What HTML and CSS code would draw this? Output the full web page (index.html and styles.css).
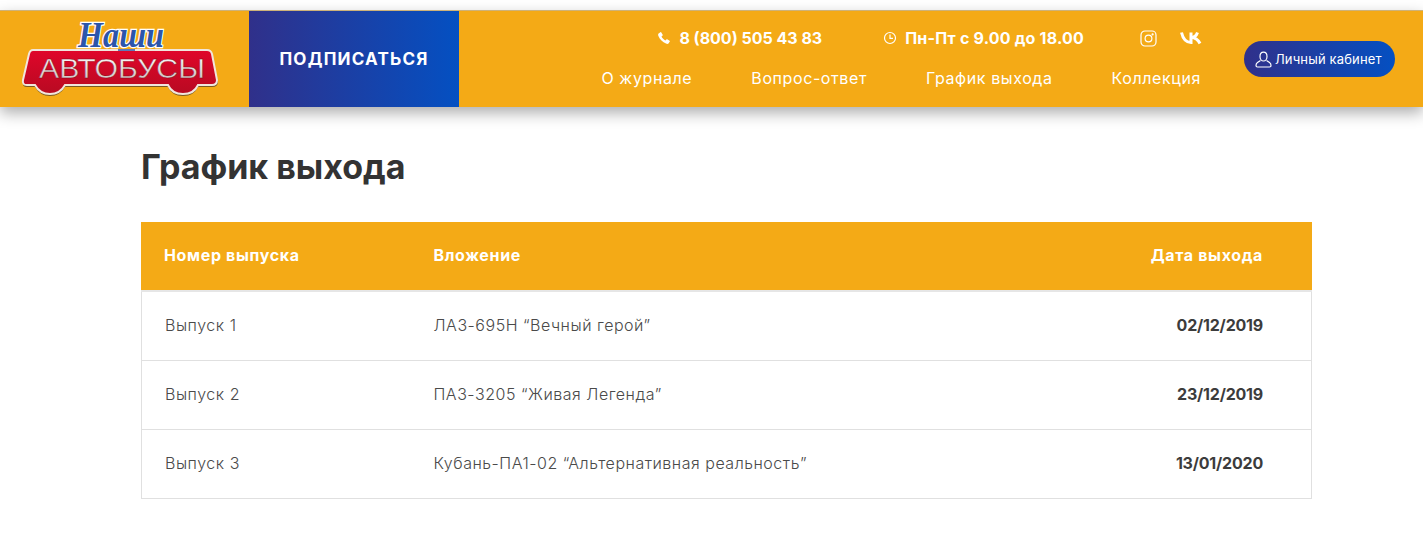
FILE: index.html
```html
<!DOCTYPE html>
<html lang="ru">
<head>
    <meta charset="UTF-8">
    <meta name="viewport" content="width=device-width, initial-scale=1.0">
    <title>График выхода</title>
    <link rel="stylesheet" href="styles.css">
</head>
<body>
    <header class="header">
        <a class="logo" href="#">
            <svg class="logo-img" width="210" height="85" viewBox="15 15 210 85">
                <defs>
                    <linearGradient id="busRed" x1="0" y1="0" x2="0" y2="1">
                        <stop offset="0" stop-color="#e0062a"/>
                        <stop offset="1" stop-color="#b80a22"/>
                    </linearGradient>
                    <linearGradient id="busText" x1="0" y1="0" x2="0" y2="1">
                        <stop offset="0" stop-color="#ffffff"/>
                        <stop offset="1" stop-color="#c9b9b9"/>
                    </linearGradient>
                </defs>
                <path class="bus-shadow" d="M33 52H207Q211 52 212 56L218 82Q218 87 212 87H198Q194 96 183 96Q172 96 168 87H65Q60 96 50 96Q40 96 35 87H27Q22 87 23 82L29 56Q30 52 33 52Z"/>
                <path class="bus-body" d="M33 50H207Q211 50 212 54L217 80Q217 85 212 85H198Q194 94 183 94Q172 94 168 85H65Q60 94 50 94Q40 94 35 85H27Q22 85 23 80L29 54Q30 50 33 50Z"/>
                <text class="bus-title" x="39" y="78" textLength="166" lengthAdjust="spacingAndGlyphs">АВТОБУСЫ</text>
                <text class="bus-script" x="78" y="47" textLength="86" lengthAdjust="spacingAndGlyphs">Наши</text>
                <path class="bus-line" d="M118 50H135"/>
            </svg>
        </a>
        <a class="subscribe" href="#">ПОДПИСАТЬСЯ</a>
        <div class="header-info">
            <div class="contacts">
                <span class="contact">
                    <svg class="icon-solid" width="14" height="14" viewBox="0 0 14 14"><path d="M3.400 1.200 1.600 2.500C1 3 1 4 1.400 5 2.800 8.400 5.600 11.200 9 12.600 10 13 11 13 11.500 12.400L12.800 10.600C13 10.300 13 10 12.600 9.700L10.200 8.300C9.900 8.100 9.600 8.200 9.400 8.400L8.400 9.500C6.900 8.800 5.200 7.100 4.500 5.600L5.600 4.600C5.800 4.400 5.900 4.100 5.700 3.800L4.300 1.400C4 1 3.700 1 3.400 1.200Z"/></svg>
                    8 (800) 505 43 83
                </span>
                <span class="contact contact-time">
                    <svg class="icon-line" width="14" height="14" viewBox="0 0 14 14"><circle cx="7" cy="7" r="5.500"/><path d="M7 3.500V7.300H10"/></svg>
                    Пн-Пт с 9.00 до 18.00
                </span>
                <span class="socials">
                    <svg class="icon-line" width="17" height="17" viewBox="0 0 17 17"><rect x="1" y="1" width="15" height="15" rx="4"/><circle cx="8.500" cy="8.500" r="3.400"/><circle cx="12.600" cy="4.400" r=".5"/></svg>
                    <svg class="icon-vk" width="22" height="14" viewBox="0 0 22 14"><path d="M1.500 1.500C3 8 6 11.500 11 11.500V1.500"/><path d="M11 6.500C14 6.500 16.500 4.500 17.500 1.500"/><path d="M11 6.500C15 6.500 18 8.500 20 12.500"/></svg>
                </span>
            </div>
            <nav class="nav">
                <a href="#">О журнале</a>
                <a href="#">Вопрос-ответ</a>
                <a href="#">График выхода</a>
                <a href="#">Коллекция</a>
            </nav>
        </div>
        <a class="account" href="#">
            <svg class="icon-line" width="17" height="17" viewBox="0 0 17 17"><path d="M5 5.500C5 3 6.500 1.200 8.500 1.200S12 3 12 5.500 10.500 10 8.500 10 5 8 5 5.500Z"/><path d="M5.500 9.500 2.500 11.500C1.500 12.200 1 13 1 14.500 1 15.500 1.500 16 2.500 16H14.500C15.500 16 16 15.500 16 14.500 16 13 15.500 12.200 14.500 11.500L11.500 9.500"/></svg>
            Личный кабинет
        </a>
    </header>

    <main class="content">
        <h1>График выхода</h1>
        <table class="schedule">
            <thead>
                <tr>
                    <th class="col-issue">Номер выпуска</th>
                    <th class="col-bus">Вложение</th>
                    <th class="col-date">Дата выхода</th>
                </tr>
            </thead>
            <tbody>
                <tr>
                    <td>Выпуск 1</td>
                    <td>ЛАЗ-695Н “Вечный герой”</td>
                    <td class="col-date">02/12/2019</td>
                </tr>
                <tr>
                    <td>Выпуск 2</td>
                    <td>ПАЗ-3205 “Живая Легенда”</td>
                    <td class="col-date">23/12/2019</td>
                </tr>
                <tr>
                    <td>Выпуск 3</td>
                    <td>Кубань-ПА1-02 “Альтернативная реальность”</td>
                    <td class="col-date">13/01/2020</td>
                </tr>
            </tbody>
        </table>
    </main>
</body>
</html>
```

FILE: styles.css
```css
body {
    font-family: Inter, "Noto Sans", sans-serif;
    margin: 0;
    padding: 10px 0 0;
    background-color: #fff;
    color: #333;
}
a {
    color: inherit;
    text-decoration: none;
}
.header {
    display: flex;
    height: 96px;
    background-color: #f4aa16;
    border-top: 1px solid #cdb27a;
    box-shadow: 0 6px 14px rgba(0, 0, 0, .32);
    color: #fff;
}
.logo {
    width: 234px;
    padding: 4px 0 0 15px;
}
.logo-img {
    display: block;
}
.bus-shadow {
    fill: #7a5a20;
}
.bus-body {
    fill: url(#busRed);
    stroke: #f1e6dc;
    stroke-width: 2;
}
.bus-title {
    font-family: "Liberation Sans", Arial, sans-serif;
    font-size: 28px;
    fill: url(#busText);
    stroke: #7c0a18;
    stroke-width: .4;
}
.bus-script {
    font-family: "Liberation Serif", serif;
    font-size: 35px;
    font-weight: bold;
    font-style: italic;
    fill: #2b55ab;
    stroke: #fff;
    stroke-width: 2.500;
    paint-order: stroke;
}
.bus-line {
    stroke: #2b55ab;
    stroke-width: 1.500;
}
.subscribe {
    display: flex;
    align-items: center;
    justify-content: center;
    width: 210px;
    background: linear-gradient(90deg, #30308a, #0450c2);
    font-size: 17px;
    font-weight: 700;
    letter-spacing: 1.200px;
}
.header-info {
    display: flex;
    flex-direction: column;
    align-items: flex-end;
    width: 742px;
    padding-top: 16px;
    box-sizing: border-box;
}
.contacts {
    display: flex;
    align-items: center;
    height: 22px;
    margin-right: -1px;
    font-size: 16px;
    font-weight: 700;
}
.contact {
    display: flex;
    align-items: center;
    gap: 8px;
}
.contact-time {
    margin-left: 61px;
    letter-spacing: .2px;
}
.socials {
    display: flex;
    align-items: center;
    gap: 23px;
    margin-left: 56px;
}
.icon-solid {
    fill: #fff;
}
.icon-line {
    fill: none;
    stroke: #fff;
    stroke-width: 1.200;
}
.icon-vk {
    fill: none;
    stroke: #fff;
    stroke-width: 3;
}
.nav {
    display: flex;
    gap: 59px;
    margin-top: 18px;
    font-size: 16px;
    line-height: 22px;
    letter-spacing: .6px;
}
.account {
    display: flex;
    align-items: center;
    gap: 3px;
    align-self: flex-start;
    box-sizing: border-box;
    width: 151px;
    height: 36px;
    margin: 30px 0 0 43px;
    padding-left: 11px;
    border-radius: 18px;
    background: linear-gradient(90deg, #30308a, #0450c2);
    font-size: 13px;
    letter-spacing: .15px;
    white-space: nowrap;
}
.content {
    width: 1171px;
    margin: 0 0 0 141px;
}
h1 {
    margin: 40px 0 35px;
    font-size: 34px;
    line-height: 40px;
    font-weight: 700;
    color: #333;
}
.schedule {
    width: 100%;
    border-collapse: collapse;
    table-layout: fixed;
    font-size: 16px;
}
.schedule th {
    height: 66px;
    padding: 0 0 2px;
    background-color: #f4aa16;
    border-bottom: 2px solid #e6e6e6;
    color: #fff;
    font-size: 16px;
    font-weight: 700;
    letter-spacing: .65px;
    text-align: left;
}
.schedule th:first-child {
    border-left: 1px solid #f4aa16;
}
.schedule th:last-child {
    border-right: 1px solid #f4aa16;
}
.schedule td {
    height: 66px;
    padding: 0 0 2px;
    border-top: 1px solid #e0e0e0;
    border-bottom: 1px solid #e0e0e0;
    color: #4a4a4a;
    font-weight: 300;
    letter-spacing: .52px;
}
.schedule td:first-child {
    border-left: 1px solid #e0e0e0;
    padding-left: 23px;
}
.schedule td:last-child {
    border-right: 1px solid #e0e0e0;
}
.schedule .col-issue {
    width: 292px;
    padding-left: 22px;
    box-sizing: border-box;
}
.schedule .col-bus {
    width: 670px;
}
.schedule .col-date {
    padding-right: 48px;
    text-align: right;
}
.schedule td.col-date {
    font-weight: 700;
    letter-spacing: -.2px;
    color: #3c3c3c;
}
```
